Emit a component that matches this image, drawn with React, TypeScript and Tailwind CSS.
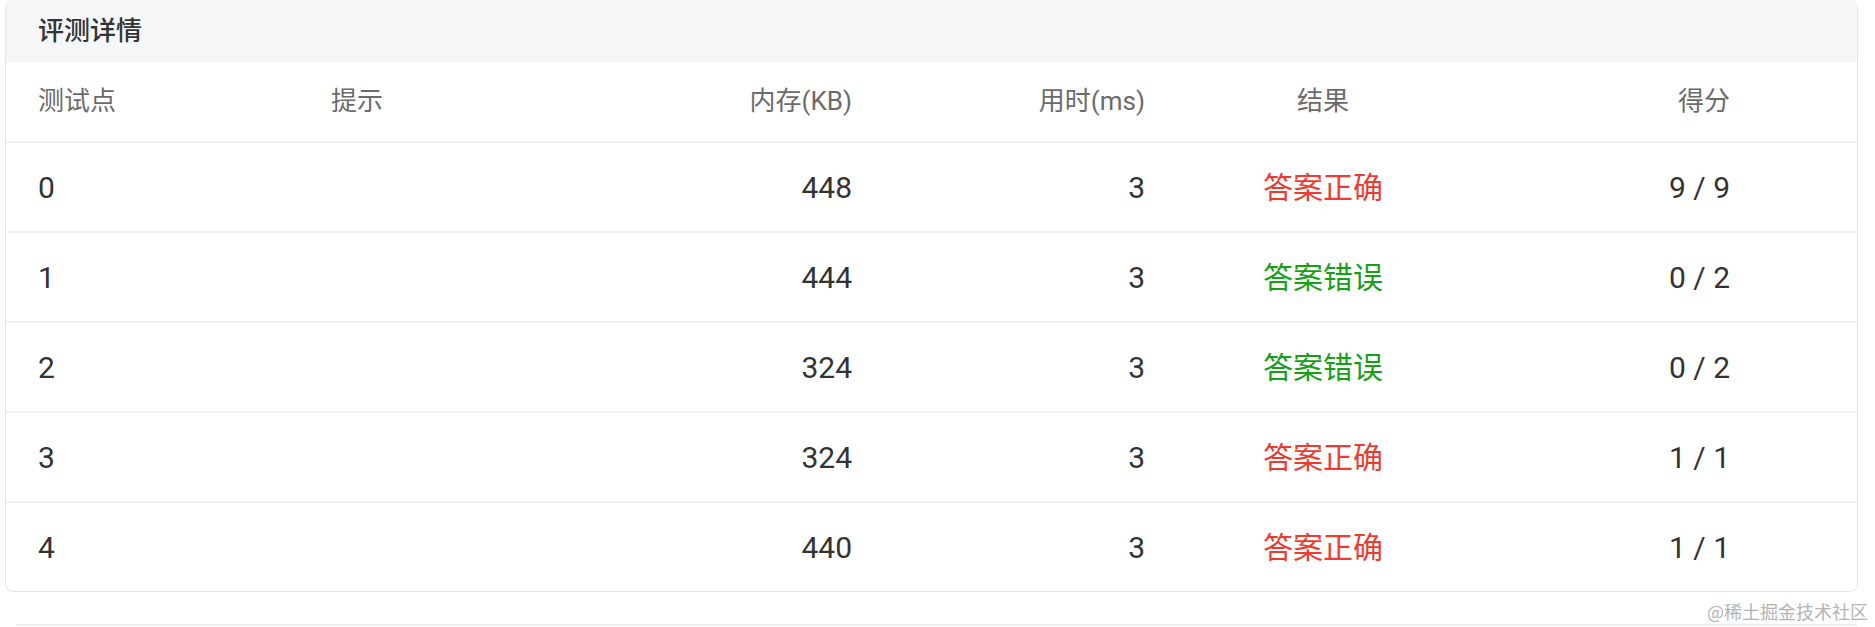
import React from 'react';

type Row = {
    id: number;
    memory: number;
    time: number;
    ok: boolean;
    score: string;
};

const rows: Row[] = [
    { id: 0, memory: 448, time: 3, ok: true, score: '9 / 9' },
    { id: 1, memory: 444, time: 3, ok: false, score: '0 / 2' },
    { id: 2, memory: 324, time: 3, ok: false, score: '0 / 2' },
    { id: 3, memory: 324, time: 3, ok: true, score: '1 / 1' },
    { id: 4, memory: 440, time: 3, ok: true, score: '1 / 1' },
];

// column widths follow the original table: id | hint | memory | time | result | score
const cols = 'grid grid-cols-[292px_292px_294px_293px_292px_1fr]';

export default function App() {
    return (
        <div className="w-[1875px] h-[627px] bg-white overflow-hidden font-['Roboto','Noto_Sans_CJK_SC',sans-serif]">
            <div className="ml-[5px] w-[1853px] rounded-lg border border-t-0 border-[#e6e6e6] overflow-hidden">
                <div className="h-[62px] bg-[#f5f6f7] px-[32px] flex items-center text-[26px] font-medium text-[#333]">
                    评测详情
                </div>

                <div className={`${cols} h-[81px] items-center border-b-2 border-[#efefef] text-[26px] text-[#6b6b6b]`}>
                    <div className="pl-[32px]">测试点</div>
                    <div className="pl-[33px]">提示</div>
                    <div className="pr-[32px] text-right">内存(KB)</div>
                    <div className="pr-[32px] text-right">用时(ms)</div>
                    <div className="text-center">结果</div>
                    <div className="pr-[127px] text-right">得分</div>
                </div>

                {rows.map((r, i) => (
                    <div
                        key={r.id}
                        className={`${cols} items-center text-[30px] text-[#333] ${i < rows.length - 1 ? 'h-[90px] border-b-2 border-[#efefef]' : 'h-[88px]'}`}
                    >
                        <div className="pl-[32px]">{r.id}</div>
                        <div className="pl-[33px]"></div>
                        <div className="pr-[32px] text-right">{r.memory}</div>
                        <div className="pr-[32px] text-right">{r.time}</div>
                        <div className={`text-center ${r.ok ? 'text-[#ec3b30]' : 'text-[#179f17]'}`}>
                            {r.ok ? '答案正确' : '答案错误'}
                        </div>
                        <div className="pr-[127px] text-right">{r.score}</div>
                    </div>
                ))}
            </div>

            <div className="mt-[8px] h-[22px] pr-[7px] flex justify-end items-center text-[18px] leading-none text-[#b3b3b3] font-['Noto_Sans_CJK_SC',sans-serif]">
                @稀土掘金技术社区
            </div>
            <div className="mt-[2px] ml-[17px] w-[1840px] h-[2px] bg-[#efefef]"></div>
        </div>
    );
}
